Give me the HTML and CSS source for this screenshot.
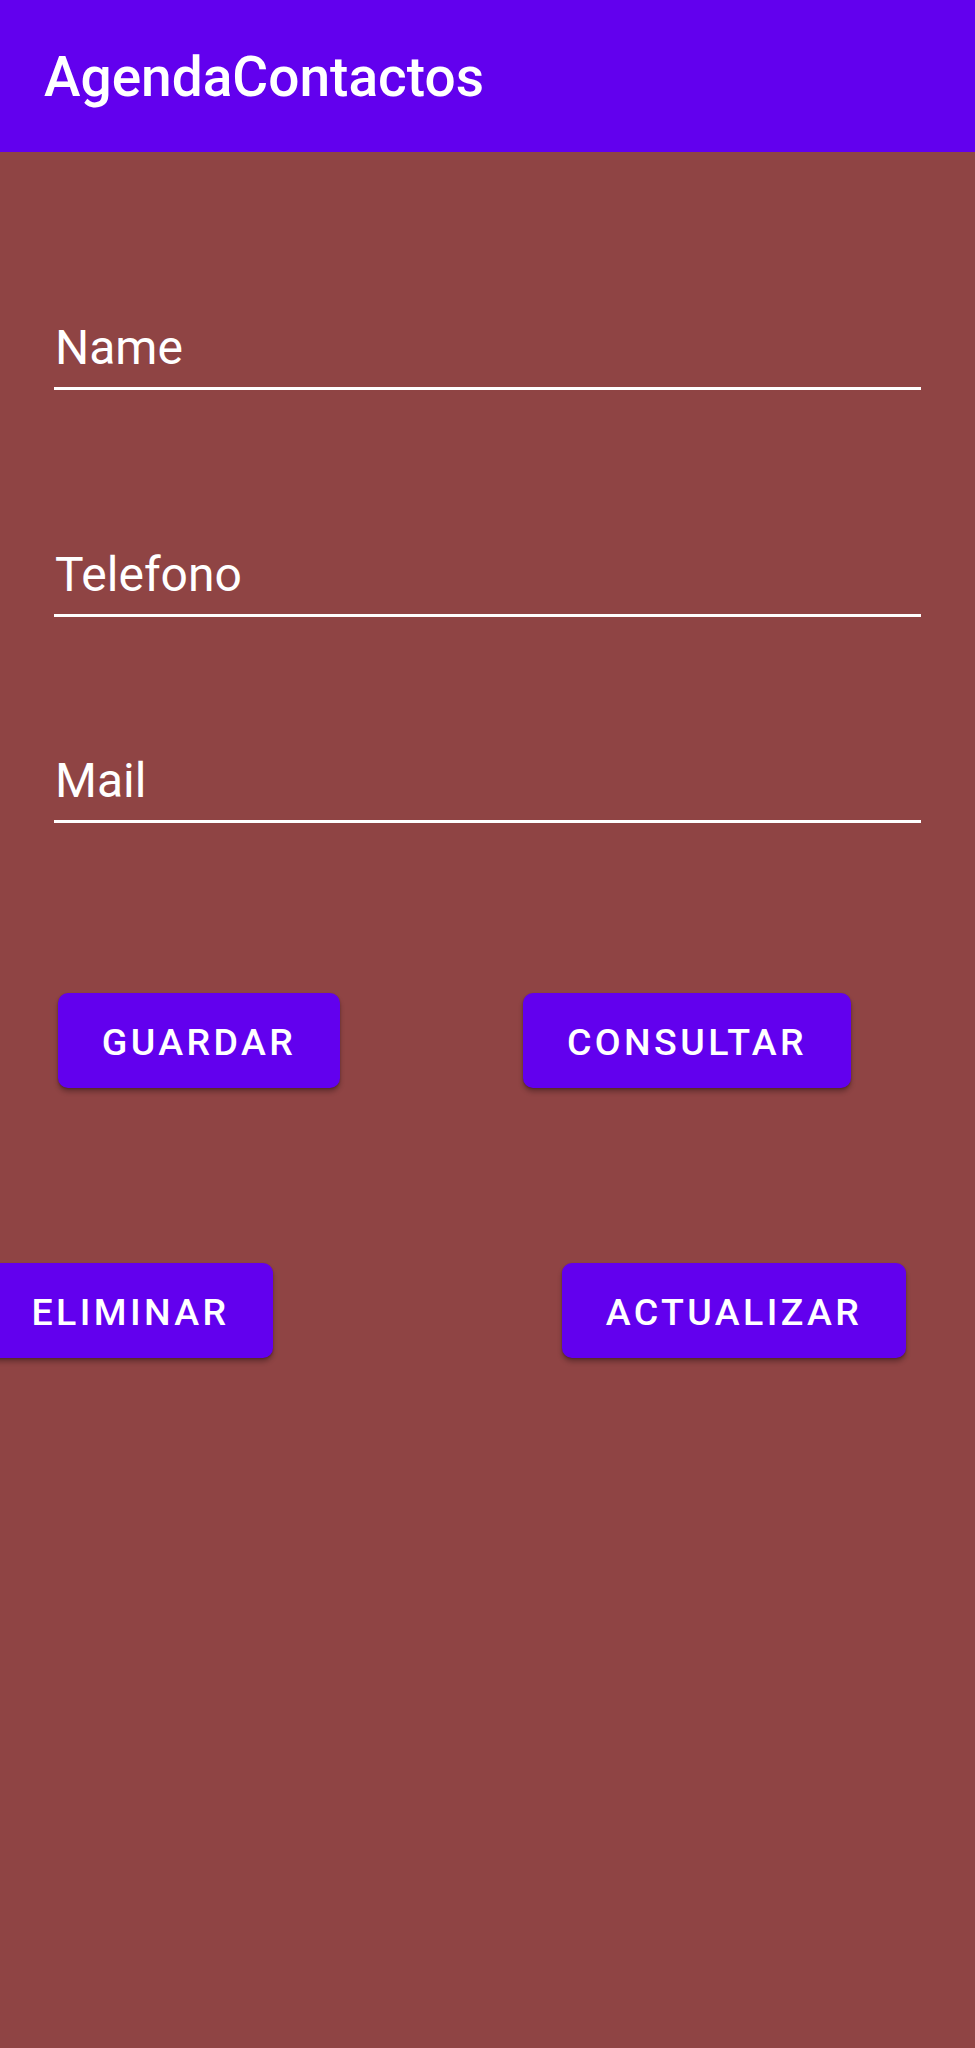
FILE: index.html
```html
<!DOCTYPE html>
<html lang="es">
<head>
<meta charset="utf-8">
<title>AgendaContactos</title>
<link rel="stylesheet" href="styles.css">
</head>
<body>
<header class="appbar">AgendaContactos</header>
<main class="content">
  <div class="field field-name">Name</div>
  <div class="field field-tel">Telefono</div>
  <div class="field field-mail">Mail</div>
  <div class="row row-1">
    <button class="btn btn-guardar">Guardar</button>
    <button class="btn btn-consultar">Consultar</button>
  </div>
  <div class="row row-2">
    <button class="btn btn-eliminar">Eliminar</button>
    <button class="btn btn-actualizar">Actualizar</button>
  </div>
</main>
</body>
</html>
```
FILE: styles.css
```css
html, body {
  margin: 0;
  padding: 0;
}
body {
  background: #8f4444;
  min-height: 2048px;
  font-family: Roboto, "Noto Sans", sans-serif;
  overflow: hidden;
}
.appbar {
  background: #6200ee;
  color: #ffffff;
  height: 152px;
  box-sizing: border-box;
  padding: 3px 0 0 44px;
  font-size: 55px;
  font-weight: 500;
  line-height: 148px;
}
.content {
  display: flex;
  flex-direction: column;
}
.field {
  margin: 0 54px;
  color: #ffffff;
  font-size: 48px;
  line-height: 56px;
  padding: 0 0 11px 1px;
  border-bottom: 3px solid #ffffff;
}
.field-name { margin-top: 168px; }
.field-tel { margin-top: 157px; }
.field-mail { margin-top: 136px; }
.row {
  display: flex;
}
.row-1 { margin-top: 170px; }
.row-2 { margin-top: 175px; }
.btn {
  height: 95px;
  box-sizing: border-box;
  border: none;
  border-radius: 10px;
  background: #6200ee;
  color: #ffffff;
  font-family: Roboto, "Noto Sans", sans-serif;
  font-size: 37.5px;
  font-weight: 500;
  letter-spacing: 3.4px;
  text-transform: uppercase;
  padding: 2px 0 0;
  text-align: center;
  box-shadow: 0 4px 5px rgba(0, 0, 0, 0.28), 0 1px 2px rgba(0, 0, 0, 0.2);
}
.btn-guardar { margin-left: 58px; width: 282px; }
.btn-consultar { margin-left: 183px; width: 328px; }
.btn-eliminar { margin-left: -12px; width: 285px; }
.btn-actualizar { margin-left: 289px; width: 344px; }
```
